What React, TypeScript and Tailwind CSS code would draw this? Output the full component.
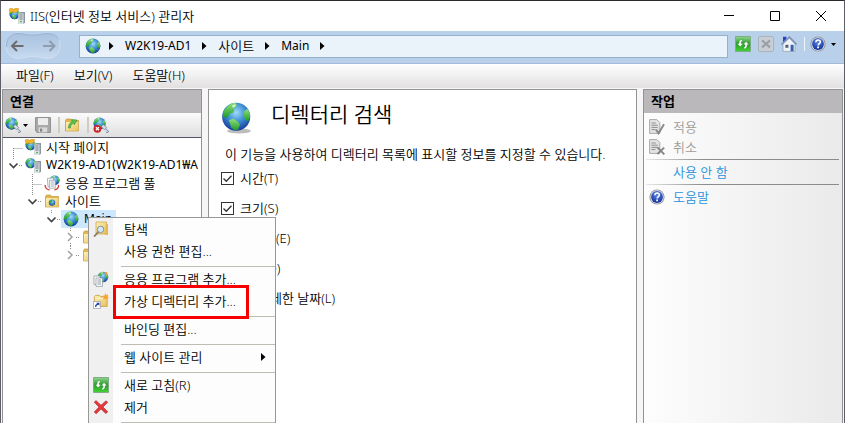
import React from "react";

type IconProps = { className?: string };

function SharedGradients() {
    return (
        <svg width="0" height="0" className="absolute" aria-hidden="true">
            <defs>
                <radialGradient id="sea" cx="0.5" cy="0.35" r="0.65">
                    <stop offset="0" stopColor="#9fdcf7" />
                    <stop offset="0.5" stopColor="#3f8fd6" />
                    <stop offset="1" stopColor="#173a9a" />
                </radialGradient>
                <linearGradient id="land" x1="0" y1="0" x2="0" y2="1">
                    <stop offset="0" stopColor="#8fe07a" />
                    <stop offset="1" stopColor="#1c9a2a" />
                </linearGradient>
                <linearGradient id="paper" x1="0" y1="0" x2="1" y2="1">
                    <stop offset="0" stopColor="#fdf0b8" />
                    <stop offset="1" stopColor="#e9c25e" />
                </linearGradient>
                <linearGradient id="green" x1="0" y1="0" x2="0" y2="1">
                    <stop offset="0" stopColor="#8fd68c" />
                    <stop offset="0.5" stopColor="#2c9c2c" />
                    <stop offset="1" stopColor="#3fd52f" />
                </linearGradient>
                <radialGradient id="helpBlue" cx="0.5" cy="0.3" r="0.7">
                    <stop offset="0" stopColor="#5f8be8" />
                    <stop offset="1" stopColor="#0f2f9c" />
                </radialGradient>
                <linearGradient id="pill" x1="0" y1="0" x2="0" y2="1">
                    <stop offset="0" stopColor="#a9c2de" />
                    <stop offset="0.5" stopColor="#b6cde6" />
                    <stop offset="1" stopColor="#c8dbf0" />
                </linearGradient>
            </defs>
        </svg>
    );
}

function GlobeShape() {
    return (
        <>
            <circle cx="8" cy="8" r="7.4" fill="url(#sea)" />
            <path d="M2 4.2C3.4 2 5.2.9 7.6.7L8.4 2 7 3.6 6.6 5.6 4.6 6.4 3.4 8.6 1 8.2C.8 6.6 1.2 5.4 2 4.2z" fill="url(#land)" />
            <path d="M4.2 9.8l2.4-.7 2.2 1.4 1.2 1.6-1 2.6-1.6.6-2-1.6z" fill="url(#land)" />
            <path d="M12.2 5.2l1.6-1.4c1 1.2 1.6 2.8 1.5 4.4l-1 2.2-1.6-.6-1-2.6z" fill="url(#land)" />
            <path d="M5.8 2.2l1.6-.8.4.8-1.4 1.2z" fill="#dcf7c8" />
        </>
    );
}

function Globe({ className = "size-4" }: IconProps) {
    return (
        <svg viewBox="0 0 16 16" className={className} aria-hidden="true">
            <GlobeShape />
        </svg>
    );
}

function LargeGlobe() {
    return (
        <svg viewBox="0 0 32 32" className="size-8 shrink-0" aria-hidden="true">
            <ellipse cx="18" cy="29" rx="12" ry="2.4" fill="#bdbdbd" />
            <g transform="translate(0 -.5) scale(1.9)">
                <GlobeShape />
            </g>
        </svg>
    );
}

function TowerShape() {
    return (
        <>
            <path d="M9.5 5.5l2-1.5H16v10.5L14.5 16h-5z" fill="#8c959e" />
            <path d="M9.5 5.5h5V16h-5z" fill="#dfe4e8" />
            <path d="M10.3 7h3.4M10.3 9h3.4M10.3 11h3.4" stroke="#67727c" strokeWidth="0.9" />
            <circle cx="12" cy="13.6" r="0.9" fill="#3fae3a" />
        </>
    );
}

function ServerGlobe({ start = false, className = "size-4" }: IconProps & { start?: boolean }) {
    return (
        <svg viewBox="0 0 16 16" className={className} aria-hidden="true">
            <g transform="translate(0 .5) scale(.7)">
                <GlobeShape />
            </g>
            {start && <path d="M0 1l3-.8 1.6 1.4L6.4 0l3.2.6-.8 3-2.4 1L3.2 4 1 4.6z" fill="#f4b62c" stroke="#c98512" strokeWidth="0.5" />}
            <TowerShape />
        </svg>
    );
}

function Folder({ children }: { children?: React.ReactNode }) {
    return (
        <svg viewBox="0 0 16 16" className="size-4 shrink-0" aria-hidden="true">
            <path d="M1.5 3.5l1-1.5h4l1 1.5h7v10.5h-13z" fill="#e2b54e" stroke="#c19a3c" strokeWidth="0.7" />
            <path d="M2 5h12.3v8.8H2z" fill="url(#paper)" />
            {children}
        </svg>
    );
}

function SitesIcon() {
    return (
        <Folder>
            <circle cx="8" cy="9.6" r="3.2" fill="url(#sea)" />
            <path d="M5.4 8.2l2.4-1.6.6 1.6-1.6 1.8zM8 10.6l2.2-.6-.8 2.6z" fill="#35b034" />
        </Folder>
    );
}

function UpFolderIcon() {
    return (
        <Folder>
            <path d="M4.5 11C4.5 7.4 6 5.4 8.4 4.6L7.4 2.4l5.6.6-2.6 4.8-.8-1.6C7.6 7 6.4 8.4 6.4 11z" fill="#5cc24a" stroke="#2f8a2a" strokeWidth="0.5" />
        </Folder>
    );
}

function BrowseIcon() {
    return (
        <svg viewBox="0 0 16 16" className="size-4" aria-hidden="true">
            <path d="M3 1h10.5v12H3z" fill="url(#paper)" stroke="#d0a23d" strokeWidth="0.7" />
            <path d="M13 3h2v11h-3z" fill="#e5b94e" />
            <path d="M5.6 10.6L1.6 15" stroke="#8e7a66" strokeWidth="1.8" strokeLinecap="round" />
            <circle cx="7.6" cy="8.4" r="3.2" fill="#cfeaf8" stroke="#7f93a3" strokeWidth="1" />
        </svg>
    );
}

function AppPoolIcon() {
    return (
        <svg viewBox="0 0 16 16" className="size-4" aria-hidden="true">
            <g transform="translate(5.4 0) scale(.66)">
                <GlobeShape />
            </g>
            <path d="M3.4 3.4l6-.6 1 8.6-6.4.4z" fill="#fff" stroke="#8894a0" strokeWidth="0.7" />
            <path d="M5.4 5.2h5.8v8H5.4z" fill="#fff" stroke="#8894a0" strokeWidth="0.7" />
            <path d="M6.6 7h3.4M6.6 9h3.4M6.6 11h3.4" stroke="#8a98a8" strokeWidth="0.8" />
            <path d="M1.2 9.8c-.6 3 2 4.8 4.4 5M14.4 9.8c.8 3-1.6 4.8-4 5" fill="none" stroke="#d43b2e" strokeWidth="1.3" />
        </svg>
    );
}

function AddAppIcon() {
    return (
        <svg viewBox="0 0 16 16" className="size-4" aria-hidden="true">
            <g transform="translate(4.2 .2) scale(.72)">
                <GlobeShape />
            </g>
            <path d="M11.4 1.6l2.4-.8.6 2.6-1.6 1.2z" fill="#ef9b32" />
            <path d="M1 5h6v8.4H1z" fill="#fff" stroke="#84909c" strokeWidth="0.7" />
            <path d="M3 7h6.4v8.4H3z" fill="#fff" stroke="#84909c" strokeWidth="0.7" />
            <path d="M4.4 9h3.6M4.4 11h3.6M4.4 13h3.6" stroke="#6f7d8c" strokeWidth="0.8" />
        </svg>
    );
}

function AddDirectoryIcon() {
    return (
        <svg viewBox="0 0 16 16" className="size-4" aria-hidden="true">
            <path d="M1.4 3.6l1-1.2h4.2l1 1.2h6.6v9.8H1.4z" fill="url(#paper)" stroke="#c79b3c" strokeWidth="0.8" />
            <path d="M2 5.6h12" stroke="#fff3c4" />
            <path d="M12.2 0l.8 2 2.4-.6-1 2 1.6 1.4-2.2.4-.4 2.4-1.4-1.8-2.2.6 1-2-1.4-1.6 2.2-.4z" fill="#f5a52c" />
            <path d="M.4 8.6h7v7h-7z" fill="#fff" stroke="#8a93b0" strokeWidth="0.7" />
            <path d="M2 14c0-2 .8-2.8 2-3L3.4 9.8h3v3l-1-1C4.2 12 3.4 12.8 3.2 14z" fill="#2740a4" />
        </svg>
    );
}

function ConnectIcon({ remove = false }: { remove?: boolean }) {
    return (
        <svg viewBox="0 0 16 16" className="size-4 shrink-0" aria-hidden="true">
            <g transform="scale(.82)">
                <GlobeShape />
            </g>
            <path d="M8 9.6l2.4-2 3.2 2.8-2 2.4z" fill="#d5dce2" stroke="#6e7e8c" strokeWidth="0.7" />
            <path d="M12.6 11.8c1 1.4 2 1.2 3 2.6-.6 1.4-2 1-2.8.6" fill="none" stroke="#7f99b0" strokeWidth="1.1" />
            {remove && (
                <>
                    <circle cx="4.4" cy="11.8" r="3.9" fill="#cc2424" />
                    <path d="M2.9 10.3l3 3M5.9 10.3l-3 3" stroke="#fff" strokeWidth="1.3" />
                </>
            )}
        </svg>
    );
}

function SaveIcon() {
    return (
        <svg viewBox="0 0 16 16" className="size-4" aria-hidden="true">
            <path d="M.6.6h14.8v14.8H2L.6 14z" fill="#a9a9a9" stroke="#8c8c8c" />
            <path d="M3 1h10v7H3z" fill="#ececec" />
            <path d="M3.6 10.4h8.6v5H3.6z" fill="#d8d8d8" />
            <path d="M5 11.6h2.2v3H5z" fill="#858585" />
        </svg>
    );
}

function RefreshIcon() {
    return (
        <svg viewBox="0 0 16 16" className="size-4" aria-hidden="true">
            <path d="M.5.5h15v15H.5z" fill="url(#green)" stroke="#7fae86" />
            <path d="M7.4 3.4c-2.4 0-3.6 1.6-3.4 4H2l3.2 3.4 3-3.4H6.2c-.2-1.2.2-2 1.2-2.4z" fill="#fff" stroke="#157a1b" strokeWidth="0.4" />
            <path d="M8.8 13c2.4 0 3.6-1.6 3.4-4.2h2L11 5.4 8 8.8h2c.2 1.4-.2 2.2-1.2 2.6z" fill="#fff" stroke="#157a1b" strokeWidth="0.4" />
        </svg>
    );
}

function StopIcon() {
    return (
        <svg viewBox="0 0 16 16" className="size-4" aria-hidden="true">
            <rect x="0.5" y="0.5" width="15" height="15" rx="1.5" fill="#c9ced4" stroke="#a9b3bd" />
            <path d="M4 4.4l8 7M12 4.4l-8 7" stroke="#98a1aa" strokeWidth="2.2" />
        </svg>
    );
}

function HomeIcon() {
    return (
        <svg viewBox="0 0 16 16" className="size-4" aria-hidden="true">
            <path d="M2 .8h3.4v4L2 7z" fill="#2b43c0" />
            <path d="M2 8l6.4-6L14 8v7.4H2z" fill="#eef2f6" stroke="#8d9bab" strokeWidth="0.7" />
            <path d="M.4 8.4L8.4 1l7.2 7.4" fill="none" stroke="#7d93bb" strokeWidth="1.6" />
            <path d="M9.6 8.8h3v6.4h-3z" fill="#2e62b8" />
            <path d="M4.4 8.8h3v3h-3z" fill="#53616f" />
        </svg>
    );
}

function HelpIcon() {
    return (
        <svg viewBox="0 0 16 16" className="size-4" aria-hidden="true">
            <circle cx="8" cy="8" r="7.6" fill="#8e8e94" />
            <circle cx="8" cy="8" r="6.7" fill="#dfe2ea" />
            <circle cx="8" cy="8" r="5.9" fill="url(#helpBlue)" />
            <path d="M5.8 6.2c.2-3 4.8-2.8 4.6-.2-.1 1.6-2.2 1.6-2.3 3.4" fill="none" stroke="#fff" strokeWidth="1.6" />
            <path d="M7.2 10.6h1.8v1.7H7.2z" fill="#fff" />
        </svg>
    );
}

function PageIcon({ mark }: { mark: "check" | "cross" }) {
    return (
        <svg viewBox="0 0 16 16" className="size-4" aria-hidden="true">
            <path d="M.6.6h7.2l3 3v10.8H.6z" fill="#e4e4e4" stroke="#a9a9a9" />
            <path d="M2.4 4h4.4M2.4 6.2h6.4M2.4 8.4h6.4M2.4 10.6h4" stroke="#8f8f8f" />
            {mark === "check" ? (
                <path d="M7 10.6l2.6 3.6 5.4-9" fill="none" stroke="#8a8a8a" strokeWidth="2" />
            ) : (
                <path d="M8.4 8.4l7 7M15.2 8.6l-6.8 6.4" stroke="#858585" strokeWidth="1.9" />
            )}
        </svg>
    );
}

function RemoveIcon() {
    return (
        <svg viewBox="0 0 16 16" className="size-4" aria-hidden="true">
            <path d="M1.2 3.2L3 1.6l5 4.6 5-4.4 1.8 1.4L10 8l4.8 4.8-2 1.8L8 10l-4.8 4.8-2-1.8L6 8z" fill="#e2383a" stroke="#b3262a" strokeWidth="0.6" />
        </svg>
    );
}

function ArrowRight() {
    return (
        <svg viewBox="0 0 5 8" className="h-2 w-[5px] shrink-0" aria-hidden="true">
            <path d="M0 0l4.5 4L0 8z" />
        </svg>
    );
}

function CaretDown() {
    return (
        <svg viewBox="0 0 5 3" className="h-[3px] w-[5px] shrink-0" aria-hidden="true">
            <path d="M0 0h5L2.5 3z" />
        </svg>
    );
}

function HistoryButtons() {
    return (
        <div className="relative h-7 w-14 shrink-0">
            <svg viewBox="0 0 56 28" className="h-7 w-14" aria-hidden="true">
                <path
                    d="M13 1C6 1 1 6 1 13.5S6 26.5 13 26.5c6 0 8-2 15-2s9 2 15 2c7 0 12-5.5 12-13S50 1 43 1c-6 0-8 1.5-15 1.5S19 1 13 1z"
                    fill="url(#pill)"
                    stroke="#cfdff1"
                />
                <path d="M1.5 15C1 6 6 1.5 13 1.5c6 0 8 1.5 15 1.5s9-1.5 15-1.5c5 0 9 2 10.5 6" fill="none" stroke="#98b1cf" />
                <path d="M18.5 14H7.5M12 9l-5 5 5 5" fill="none" stroke="#6d6d70" strokeWidth="2" />
                <path d="M38 14h11M44.5 9l5 5-5 5" fill="none" stroke="#8e9cac" strokeWidth="2" />
            </svg>
            <div className="absolute inset-0 flex">
                <button className="flex-1" aria-label="뒤로" />
                <button className="flex-1" aria-label="앞으로" />
            </div>
        </div>
    );
}

const menus = ["파일(F)", "보기(V)", "도움말(H)"];

const crumbs = ["W2K19-AD1", "사이트", "Main"];

function nameClass(name: string) {
    return /^[A-Za-z]/.test(name) ? "text-[12px] font-normal" : "";
}

type TreeRow = {
    label: string;
    icon: React.ReactNode;
    indent: string;
    node: "leaf" | "open" | "closed";
    line: string;
    selected?: boolean;
};

const treeRows: TreeRow[] = [
    { label: "시작 페이지", icon: <ServerGlobe start />, indent: "", node: "leaf", line: "M10.5 10V18M10.5 10.5H20" },
    { label: "W2K19-AD1(W2K19-AD1₩A", icon: <ServerGlobe />, indent: "", node: "open", line: "M10.5 0V4M16 9.5H20" },
    { label: "응용 프로그램 풀", icon: <AppPoolIcon />, indent: "pl-[19px]", node: "leaf", line: "M10.5 0V18M10.5 10.5H20" },
    { label: "사이트", icon: <SitesIcon />, indent: "pl-[19px]", node: "open", line: "M10.5 0V4M16 9.5H20" },
    { label: "Main", icon: <Globe />, indent: "pl-[38px]", node: "open", line: "M10.5 0V4M16 9.5H20", selected: true },
    { label: "", icon: <Folder />, indent: "pl-[57px]", node: "closed", line: "M10.5 0V4M10.5 15V18M16 9.5H20" },
    { label: "", icon: <Folder />, indent: "pl-[57px]", node: "closed", line: "M10.5 0V4M16 9.5H20" },
];

function Tree() {
    return (
        <ul role="tree" className="flex-1 overflow-hidden bg-white">
            {treeRows.map((row, index) => (
                <li key={index} role="treeitem" aria-selected={!!row.selected} className={`flex h-[18px] ${row.indent}`}>
                    <svg viewBox="0 0 20 18" className="h-[18px] w-5 shrink-0" aria-hidden="true">
                        <path d={row.line} fill="none" stroke="#8c8c8c" strokeDasharray="1 1" />
                        {row.node === "open" && <path d="M6.5 7.5l4 4 4-4" fill="none" stroke="#404040" strokeWidth="1.6" />}
                        {row.node === "closed" && <path d="M8 5l4 4-4 4" fill="none" stroke="#a0a0a0" strokeWidth="1.5" />}
                    </svg>
                    <span className={`flex items-center gap-[5px] pr-1 pl-0.5 whitespace-nowrap ${row.selected ? "bg-[#cce8ff]" : ""}`}>
                        <span className="size-4 shrink-0">{row.icon}</span>
                        <span className={nameClass(row.label)}>{row.label}</span>
                    </span>
                </li>
            ))}
        </ul>
    );
}

function ConnectionsPanel() {
    return (
        <section className="flex w-[200px] shrink-0 flex-col overflow-hidden border-x border-t border-[#939393]">
            <h2 className="h-[23px] shrink-0 bg-[#bab8ba] pl-[7px] leading-[22px] font-bold">연결</h2>
            <div className="flex h-[25px] shrink-0 items-center border-b border-[#55556a] bg-linear-to-b from-[#fbfbfb] to-[#e0dfe0] pl-0.5">
                <button className="flex items-center gap-0.5" aria-label="연결 만들기">
                    <ConnectIcon />
                    <CaretDown />
                </button>
                <button className="ml-[7px]" aria-label="저장" disabled>
                    <SaveIcon />
                </button>
                <span className="mr-1 ml-[7px] h-4 w-0.5 bg-[#cfcdc0]" />
                <button aria-label="위로">
                    <UpFolderIcon />
                </button>
                <span className="mr-1 ml-[7px] h-4 w-0.5 bg-[#cfcdc0]" />
                <button aria-label="연결 제거">
                    <ConnectIcon remove />
                </button>
            </div>
            <Tree />
        </section>
    );
}

const fields = [
    { id: "time", label: "시간(T)", indent: "" },
    { id: "size", label: "크기(S)", indent: "" },
    { id: "extension", label: "확장명(E)", indent: "" },
    { id: "date", label: "날짜(D)", indent: "" },
    { id: "longDate", label: "자세한 날짜(L)", indent: "pl-[18px]" },
];

function FeaturePage() {
    return (
        <main className="flex-1 overflow-hidden border-x border-t border-[#939393] bg-white pt-3 pl-3">
            <header className="flex items-center gap-[18px]">
                <LargeGlobe />
                <h1 className="pb-2 text-[21px] leading-6">디렉터리 검색</h1>
            </header>
            <p className="mt-[11px] pl-1 whitespace-nowrap">이 기능을 사용하여 디렉터리 목록에 표시할 정보를 지정할 수 있습니다.</p>
            <form>
                {fields.map((field) => (
                    <div key={field.id} className={`flex h-[30px] items-center gap-1.5 ${field.indent}`}>
                        <span className="relative size-[13px]">
                            <input
                                id={field.id}
                                type="checkbox"
                                defaultChecked
                                className="peer block size-[13px] appearance-none border border-[#333] bg-white"
                            />
                            <svg viewBox="0 0 13 13" className="pointer-events-none absolute inset-0 hidden peer-checked:block" aria-hidden="true">
                                <path d="M2.5 6.5l2.8 2.8 5.2-5.6" fill="none" stroke="#333" strokeWidth="1.3" />
                            </svg>
                        </span>
                        <label htmlFor={field.id}>{field.label}</label>
                    </div>
                ))}
            </form>
        </main>
    );
}

function ActionsPanel() {
    return (
        <aside className="w-[200px] shrink-0 border-x border-t border-[#939393] bg-linear-to-r from-[#fdfdfd] to-[#eaeaea]">
            <h2 className="h-[23px] bg-[#bab8ba] pl-[7px] leading-[22px] font-bold">작업</h2>
            <div className="flex flex-col pt-1 pr-[3px] pl-0.5">
                <button disabled className="flex h-5 items-center gap-2 pl-[3px] text-[#9c9c9c]">
                    <PageIcon mark="check" />
                    적용
                </button>
                <button disabled className="flex h-5 items-center gap-2 pl-[3px] text-[#9c9c9c]">
                    <PageIcon mark="cross" />
                    취소
                </button>
                <div className="mt-0.5 h-px bg-linear-to-r from-[#e8e8e8] via-[#8c8c8c] via-30% to-[#8c8c8c]" />
                <a href="#disable" className="h-6 pl-[27px] leading-6 text-[#2693dc]">
                    사용 안 함
                </a>
                <div className="h-px bg-linear-to-r from-[#e8e8e8] via-[#8c8c8c] via-30% to-[#8c8c8c]" />
                <a href="#help" className="flex h-6 items-center gap-2 pl-[3px] text-[#2693dc]">
                    <HelpIcon />
                    도움말
                </a>
            </div>
        </aside>
    );
}

type MenuEntry = { label: string; icon?: React.ReactNode; submenu?: boolean; marked?: boolean };

const menuGroups: MenuEntry[][] = [
    [{ label: "탐색", icon: <BrowseIcon /> }, { label: "사용 권한 편집..." }],
    [
        { label: "응용 프로그램 추가...", icon: <AddAppIcon /> },
        { label: "가상 디렉터리 추가...", icon: <AddDirectoryIcon />, marked: true },
    ],
    [{ label: "바인딩 편집..." }],
    [{ label: "웹 사이트 관리", submenu: true }],
    [
        { label: "새로 고침(R)", icon: <RefreshIcon /> },
        { label: "제거", icon: <RemoveIcon /> },
    ],
];

function ContextMenu() {
    return (
        <div
            role="menu"
            className="absolute top-[216px] left-[87px] w-[188px] border border-[#979797] bg-[linear-gradient(90deg,#f0f0f0_24px,#fdfdfd_24px)]"
        >
            {menuGroups.map((group) => (
                <div key={group[0].label} role="group">
                    {group.map((entry) => (
                        <div key={entry.label} className="relative">
                            <button role="menuitem" className="flex h-[22px] w-full items-center pr-[9px] pl-1 text-left">
                                <span className="mr-[15px] size-4 shrink-0">{entry.icon}</span>
                                <span className="flex-1 whitespace-nowrap">{entry.label}</span>
                                {entry.submenu && <ArrowRight />}
                            </button>
                            {entry.marked && (
                                <span className="pointer-events-none absolute -top-[5px] left-6 h-[34px] w-[136px] border-[3px] border-[#f80000]" />
                            )}
                        </div>
                    ))}
                    <div className="flex h-1.5 items-end pb-px pl-8">
                        <span className="h-px flex-1 bg-[#bdbdb4]" />
                    </div>
                </div>
            ))}
        </div>
    );
}

export default function App() {
    return (
        <div className="relative flex h-screen flex-col overflow-hidden border-x border-t border-x-[#5c5f66] border-t-[#2b292c] bg-[#f6f6f6] font-['Noto_Sans','Noto_Sans_CJK_KR',sans-serif] text-[13px] leading-[18px] font-[350] text-black">
            <SharedGradients />
            <div className="flex h-[30px] shrink-0 items-center bg-white pl-2">
                <ServerGlobe start />
                <span className="ml-[5px] flex-1">IIS(인터넷 정보 서비스) 관리자</span>
                <button className="flex h-full w-[46px] items-center justify-center" aria-label="최소화">
                    <svg viewBox="0 0 10 10" className="size-2.5">
                        <path d="M0 4.5h10" stroke="#000" />
                    </svg>
                </button>
                <button className="flex h-full w-[46px] items-center justify-center" aria-label="최대화">
                    <svg viewBox="0 0 10 10" className="size-2.5">
                        <path d="M.5.5h9v9h-9z" fill="none" stroke="#000" />
                    </svg>
                </button>
                <button className="flex h-full w-[46px] items-center justify-center" aria-label="닫기">
                    <svg viewBox="0 0 10 10" className="size-2.5">
                        <path d="M0 0l10 10M10 0L0 10" stroke="#000" />
                    </svg>
                </button>
            </div>

            <div className="flex h-[33px] shrink-0 items-center border-b border-[#a3bbd8] bg-[#b9d0eb] pr-2 pb-0.5 pl-1">
                <HistoryButtons />
                <nav className="ml-[18px] flex h-[23px] flex-1 items-center border border-[#94b1cb] bg-[#eaf2fa] pl-[5px]">
                    <Globe />
                    <span className="ml-2">
                        <ArrowRight />
                    </span>
                    {crumbs.map((crumb) => (
                        <React.Fragment key={crumb}>
                            <a href="#crumb" className={`mx-[11px] ${nameClass(crumb)}`}>
                                {crumb}
                            </a>
                            <ArrowRight />
                        </React.Fragment>
                    ))}
                </nav>
                <div className="ml-[7px] flex items-center gap-[7px] pb-1">
                    <button aria-label="새로 고침">
                        <RefreshIcon />
                    </button>
                    <button aria-label="중지" disabled>
                        <StopIcon />
                    </button>
                    <button aria-label="홈">
                        <HomeIcon />
                    </button>
                    <button className="flex items-center gap-[5px]" aria-label="도움말">
                        <span className="h-3.5 w-px bg-[#eef4fb]" />
                        <HelpIcon />
                        <CaretDown />
                    </button>
                </div>
            </div>

            <div className="flex h-6 shrink-0 items-center gap-5 bg-linear-to-b from-white to-[#e2e0e1] pb-0.5 pl-[15px]">
                {menus.map((menu) => (
                    <button key={menu}>{menu}</button>
                ))}
            </div>

            <div className="flex min-h-0 flex-1 gap-1.5 px-px pt-px">
                <ConnectionsPanel />
                <FeaturePage />
                <ActionsPanel />
            </div>

            <ContextMenu />
        </div>
    );
}
